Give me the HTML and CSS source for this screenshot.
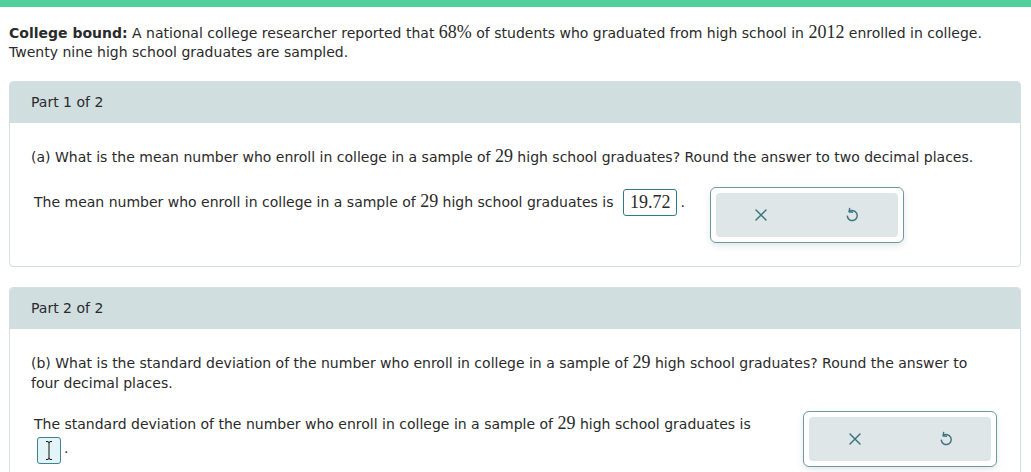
FILE: index.html
```html
<!DOCTYPE html>
<html>
<head>
<meta charset="utf-8">
<link rel="stylesheet" href="styles.css">
</head>
<body>
<div class="topbar"></div>
<main class="page">
  <p class="intro"><b>College bound:</b> A national college researcher reported that <span class="m">68%</span> of students who graduated from high school in <span class="m">2012</span> enrolled in college. Twenty nine high school graduates are sampled.</p>

  <section class="part">
    <div class="part-head">Part 1 of 2</div>
    <div class="part-body">
      <p class="q">(a) What is the mean number who enroll in college in a sample of <span class="m">29</span> high school graduates? Round the answer to two decimal places.</p>
      <div class="answer-row">
        <div class="sentence">The mean number who enroll in college in a sample of <span class="m">29</span> high school graduates is <span class="ans filled">19.72</span>.</div>
        <div class="tools">
          <div class="tools-inner">
            <button class="tbtn" aria-label="clear"><svg width="14" height="14" viewBox="0 0 14 14"><path d="M2 2L12 12M12 2L2 12" stroke="#3e7480" stroke-width="1.5" stroke-linecap="round" fill="none"/></svg></button>
            <button class="tbtn" aria-label="undo"><svg width="14" height="16" viewBox="0 0 14 16"><path d="M4.2 4.6A5 5 0 1 1 2.3 9.2" stroke="#3e7480" stroke-width="1.5" stroke-linecap="round" fill="none"/><path d="M4.6 1.6L4.2 4.8L7.4 5.2" stroke="#3e7480" stroke-width="1.5" stroke-linecap="round" stroke-linejoin="round" fill="none"/></svg></button>
          </div>
        </div>
      </div>
    </div>
  </section>

  <section class="part">
    <div class="part-head">Part 2 of 2</div>
    <div class="part-body">
      <p class="q">(b) What is the standard deviation of the number who enroll in college in a sample of <span class="m">29</span> high school graduates? Round the answer to four decimal places.</p>
      <div class="answer-row second">
        <div class="sentence">The standard deviation of the number who enroll in college in a sample of <span class="m">29</span> high school graduates is <span class="ans empty"><svg width="8" height="21" viewBox="0 0 8 21"><path d="M1 1.5Q4 1 4 3V18Q4 20 1 19.5M7 1.5Q4 1 4 3M4 18Q4 20 7 19.5" stroke="#111" stroke-width="1" fill="none"/></svg></span>.</div>
        <div class="tools">
          <div class="tools-inner">
            <button class="tbtn" aria-label="clear"><svg width="14" height="14" viewBox="0 0 14 14"><path d="M2 2L12 12M12 2L2 12" stroke="#3e7480" stroke-width="1.5" stroke-linecap="round" fill="none"/></svg></button>
            <button class="tbtn" aria-label="undo"><svg width="14" height="16" viewBox="0 0 14 16"><path d="M4.2 4.6A5 5 0 1 1 2.3 9.2" stroke="#3e7480" stroke-width="1.5" stroke-linecap="round" fill="none"/><path d="M4.6 1.6L4.2 4.8L7.4 5.2" stroke="#3e7480" stroke-width="1.5" stroke-linecap="round" stroke-linejoin="round" fill="none"/></svg></button>
          </div>
        </div>
      </div>
    </div>
  </section>
</main>
</body>
</html>
```

FILE: styles.css
```css
html, body {
  margin: 0;
  padding: 0;
  background: #fff;
}
body {
  font-family: "DejaVu Sans", Verdana, sans-serif;
  font-size: 14px;
  color: #2a2a2a;
  overflow: hidden;
}
.topbar {
  height: 7px;
  background: #52cf9b;
}
.page {
  padding: 16px 10px 0 9px;
}
.intro {
  margin: 0;
  line-height: 19px;
}
.m {
  font-family: "Liberation Serif", "Times New Roman", serif;
  font-size: 18px;
  line-height: 1;
}
.part {
  margin-top: 19px;
  border: 1px solid #d3dfe1;
  border-radius: 4px;
  overflow: hidden;
}
.part + .part {
  margin-top: 20px;
}
.part-head {
  height: 41px;
  line-height: 41px;
  background: #d0dee0;
  padding-left: 21px;
}
.part-body {
  padding: 24px 23px 23px 21px;
}
.q {
  margin: 0;
  line-height: 20px;
}
.answer-row {
  display: flex;
  align-items: flex-start;
  margin-top: 20px;
  padding-left: 3px;
}
.answer-row.second {
  margin-top: 18px;
}
.sentence {
  flex: 0 1 auto;
  line-height: 20px;
  padding-top: 2px;
}
.second .sentence {
  width: 730px;
  padding-top: 3px;
}
.ans {
  display: inline-block;
  vertical-align: middle;
  box-sizing: border-box;
  border: 1px solid #2f7d89;
  border-radius: 3px;
  height: 27px;
  margin-left: 4px;
  margin-right: 3px;
}
.ans.filled {
  font-family: "Liberation Serif", "Times New Roman", serif;
  font-size: 18px;
  line-height: 25px;
  padding: 0 6px;
  margin-left: 5px;
}
.ans.empty {
  width: 24px;
  margin-left: 3px;
  margin-top: 3px;
  background: #e3f4f8;
  border: 1.5px solid #3b8592;
  text-align: center;
  padding-top: 1.5px;
}
.ans.empty svg {
  display: block;
  margin: 0 auto;
}
.tools {
  flex: 0 0 auto;
  margin-left: 25px;
  width: 194px;
  box-sizing: border-box;
  border: 1px solid #6d99a2;
  border-radius: 6px;
  padding: 5px;
  background: #fff;
  box-shadow: 0 3px 6px rgba(40, 60, 70, 0.12);
}
.second .tools {
  margin-left: auto;
}
.tools-inner {
  display: flex;
  background: #dfe6e8;
  border-radius: 4px;
  height: 44px;
}
.tbtn {
  flex: 1;
  border: 0;
  background: transparent;
  display: flex;
  align-items: center;
  justify-content: center;
  padding: 0;
}
```
